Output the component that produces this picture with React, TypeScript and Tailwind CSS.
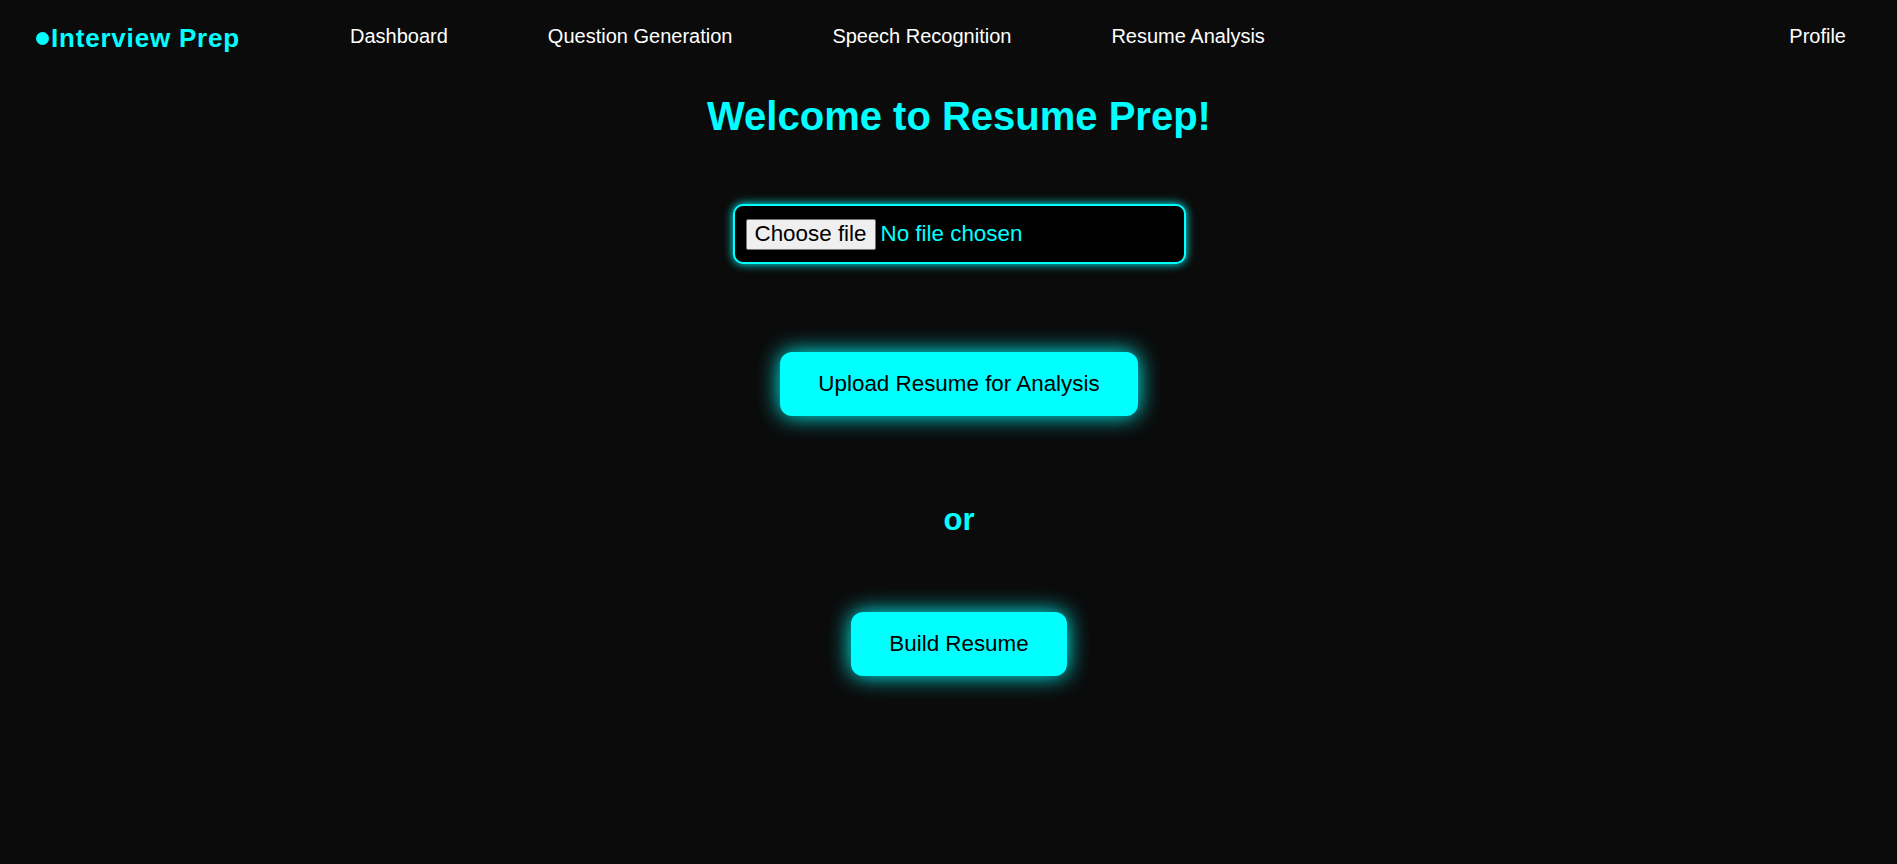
import React from "react";

export default function App() {
  const links = ["Dashboard", "Question Generation", "Speech Recognition", "Resume Analysis"];
  return (
    <div className="min-h-[864px] w-full bg-[#0b0b0b] text-white" style={{ fontFamily: '"Liberation Sans", Arial, sans-serif' }}>
      <nav className="flex items-start pt-[26px] pl-[36px] pr-[51px] gap-[100px]">
        <div className="w-[214px] shrink-0 flex items-center h-[24px] gap-[2px]">
          <span className="w-[13px] h-[13px] rounded-full bg-[#00ffff] shrink-0" />
          <span className="text-[26px] leading-none font-bold text-[#00ffff] tracking-[0.8px] whitespace-nowrap">Interview Prep</span>
        </div>
        {links.map((l) => (
          <a key={l} className="text-[20px] leading-none text-white whitespace-nowrap cursor-pointer">{l}</a>
        ))}
        <a className="ml-auto text-[20px] leading-none text-white cursor-pointer">Profile</a>
      </nav>

      <main className="flex flex-col items-center pl-[21px]">
        <h1 className="mt-[46px] text-[40px] leading-none font-bold text-[#00ffff]">Welcome to Resume Prep!</h1>

        <div className="mt-[68px] w-[453px] h-[60px] bg-black border-2 border-[#00ffff] rounded-[10px] shadow-[0_0_10px_#00ffff] flex items-center pl-[11px] gap-[5px]">
          <span className="h-[31px] px-[8px] flex items-center bg-[#efefef] border border-[#767676] rounded-[2px] text-black text-[22.4px] leading-none whitespace-nowrap">Choose file</span>
          <span className="text-[#00ffff] text-[22.4px] leading-none whitespace-nowrap">No file chosen</span>
        </div>

        <button className="mt-[88px] h-[64px] px-[38px] rounded-[12px] bg-[#00ffff] text-black text-[22.4px] leading-none shadow-[0_0_22px_#00ffff] whitespace-nowrap">
          Upload Resume for Analysis
        </button>

        <p className="mt-[88px] text-[31px] leading-none font-bold text-[#00ffff]">or</p>

        <button className="mt-[77px] h-[64px] px-[38px] rounded-[12px] bg-[#00ffff] text-black text-[22.4px] leading-none shadow-[0_0_22px_#00ffff] whitespace-nowrap">
          Build Resume
        </button>
      </main>
    </div>
  );
}
